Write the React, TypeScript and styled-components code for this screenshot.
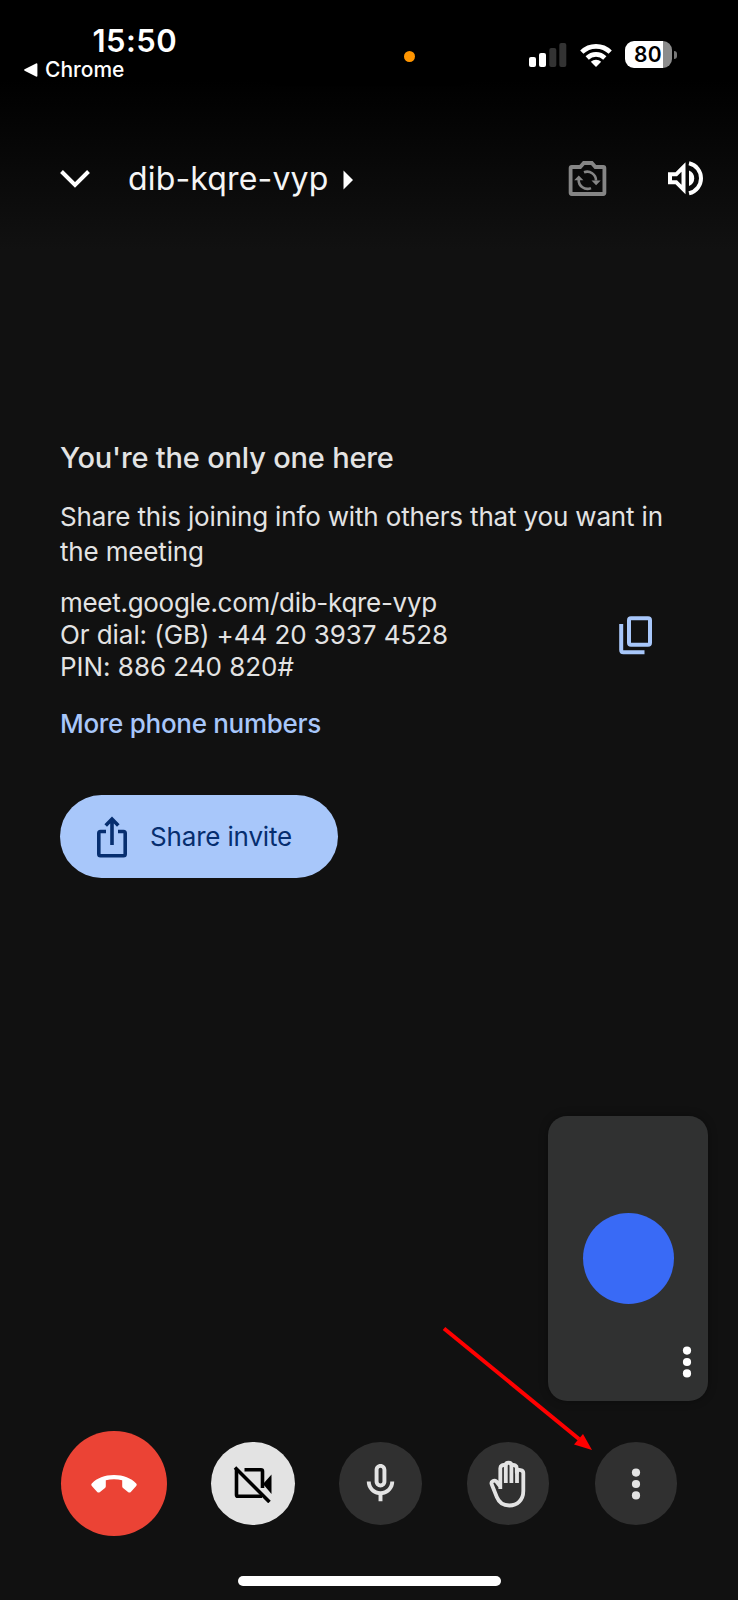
import React from "react";
import styled, { createGlobalStyle } from "styled-components";

const GlobalStyle = createGlobalStyle`
  * { box-sizing: border-box; }
  body { margin: 0; background: #121212; }
  button { border: 0; padding: 0; background: none; font: inherit; }
  svg { display: block; flex: none; }
`;

const Screen = styled.div`
  position: relative;
  width: 738px;
  height: 1600px;
  display: flex;
  flex-direction: column;
  overflow: hidden;
  background: linear-gradient(#000 0, #000 80px, #111 250px);
  color: #e3e3e3;
  font-family: Inter, "Liberation Sans", sans-serif;
`;

const StatusBar = styled.header`
  height: 110px;
  display: flex;
  align-items: flex-start;
  color: #fff;
`;

const ClockGroup = styled.div`
  width: 252px;
  padding: 25px 0 0 24px;
`;

const Clock = styled.div`
  padding-left: 68.5px;
  font-size: 31px;
  line-height: 32px;
  font-weight: 600;
  letter-spacing: 0.45px;
`;

const BackLink = styled.div`
  display: flex;
  align-items: center;
  gap: 7px;
  margin-top: 2px;
  font-size: 21px;
  line-height: 22px;
  font-weight: 500;
`;

const Island = styled.div`
  width: 232px;
  height: 60px;
  margin-top: 26px;
  padding: 24.5px 0 0 151.5px;
  border-radius: 30px;
  background: #000;
`;

const RecordingDot = styled.div`
  width: 11px;
  height: 11px;
  border-radius: 50%;
  background: #ff9500;
`;

const Indicators = styled.div`
  display: flex;
  align-items: flex-start;
  gap: 13px;
  padding: 41px 0 0 45px;
`;

const Battery = styled.div`
  position: relative;
  width: 47px;
  height: 27px;
  border-radius: 9px;
  background: linear-gradient(90deg, #fff 38px, #8c8c8c 38px);
  color: #000;
  font-size: 21px;
  line-height: 27px;
  font-weight: 600;
  letter-spacing: 0.4px;
  padding-left: 9px;

  &::after {
    content: "";
    position: absolute;
    left: 49px;
    top: 9.5px;
    width: 3px;
    height: 8px;
    border-radius: 0 3px 3px 0;
    background: #777;
  }
`;

const MeetingBar = styled.nav`
  height: 140px;
  padding: 0 34px 0 59px;
  display: flex;
  align-items: flex-start;
`;

const MeetingCode = styled.h1`
  margin: 49px 0 0 37px;
  width: 201px;
  color: #f5f5f5;
  font-size: 32px;
  line-height: 40px;
  font-weight: 400;
  letter-spacing: 0.16px;
  white-space: nowrap;
`;

const IconSlot = styled.button<{ $top: number; $left: number }>`
  margin-top: ${(p) => p.$top}px;
  margin-left: ${(p) => p.$left}px;
`;

const JoinInfo = styled.main`
  padding: 188px 60px 0;
`;

const Heading = styled.h2`
  margin: 0;
  font-size: 29px;
  line-height: 40px;
  font-weight: 500;
  letter-spacing: -0.18px;
  white-space: nowrap;
`;

const Hint = styled.p`
  margin: 21px 0 0;
  font-size: 26px;
  line-height: 35px;
  letter-spacing: -0.16px;
  white-space: nowrap;
`;

const DetailsRow = styled.div`
  display: flex;
  align-items: center;
  justify-content: space-between;
  padding-right: 26px;
  margin-top: 18px;
`;

const Details = styled.div`
  font-size: 26px;
  line-height: 32px;
`;

const Line = styled.div<{ $spacing: number }>`
  letter-spacing: ${(p) => p.$spacing}px;
  white-space: nowrap;
`;

const NumbersLink = styled.a`
  display: block;
  margin-top: 24px;
  color: #a8c7fa;
  font-size: 26px;
  line-height: 34px;
  font-weight: 500;
  letter-spacing: -0.29px;
  white-space: nowrap;
`;

const ShareButton = styled.button`
  display: flex;
  align-items: center;
  gap: 22px;
  width: 278px;
  height: 83px;
  margin-top: 54px;
  padding-left: 36px;
  border-radius: 42px;
  background: #a8c7fa;
  color: #062e6f;
  font-size: 26px;
  letter-spacing: -0.17px;
  white-space: nowrap;
`;

const SelfView = styled.section`
  flex: none;
  width: 160px;
  height: 285px;
  margin: 238px 30px 0 auto;
  padding: 97px 16px 0 34.5px;
  border-radius: 19px;
  background: #303131;
  box-shadow: 0 0 8px rgba(0, 0, 0, 0.35);
`;

const Avatar = styled.div`
  width: 91px;
  height: 91px;
  border-radius: 50%;
  background: #396af6;
`;

const TileMenu = styled.button`
  display: block;
  margin: 40.5px 0 0 auto;
`;

const Controls = styled.footer`
  display: flex;
  align-items: center;
  height: 106px;
  margin: 29.5px 0 0 61px;
`;

const ControlButton = styled.button<{ $size?: number; $bg?: string; $gap?: number }>`
  display: flex;
  align-items: center;
  justify-content: center;
  flex: none;
  width: ${(p) => p.$size ?? 82.5}px;
  height: ${(p) => p.$size ?? 82.5}px;
  margin-left: ${(p) => p.$gap ?? 45.3}px;
  border-radius: 50%;
  background: ${(p) => p.$bg ?? "#303030"};
`;

const HomeIndicator = styled.div`
  flex: none;
  width: 263px;
  height: 10px;
  margin: 39px 0 0 238px;
  border-radius: 5px;
  background: #fff;
`;

const Pointer = styled.svg`
  position: absolute;
  left: 439.5px;
  top: 1324px;
`;

const Dots = ({ color }: { color: string }) => (
  <svg width="10" height="34" viewBox="0 0 10 34" fill={color}>
    <circle cx="5" cy="5.6" r="4.1" />
    <circle cx="5" cy="17" r="4.1" />
    <circle cx="5" cy="28.4" r="4.1" />
  </svg>
);

const SignalIcon = () => (
  <svg width="38" height="27" viewBox="0 0 38 27">
    <rect x="0" y="16" width="7" height="10" rx="2" fill="#fff" />
    <rect x="10" y="12" width="7" height="14" rx="2" fill="#fff" />
    <rect x="20.3" y="7" width="7" height="19" rx="2" fill="#333" />
    <rect x="30.3" y="2" width="7" height="24" rx="2" fill="#333" />
  </svg>
);

const WifiIcon = () => (
  <svg width="32" height="27" viewBox="0 0 32 27" fill="none" stroke="#fff" strokeWidth="4.6">
    <path d="M1.8 11.2a20.3 20.3 0 0 1 28.4 0" />
    <path d="M7.2 17a12.6 12.6 0 0 1 17.6 0" />
    <path d="M10.8 20.8a7.6 7.6 0 0 1 10.4 0L16 26z" fill="#fff" stroke="none" />
  </svg>
);

export default function App() {
  return (
    <Screen>
      <GlobalStyle />
      <StatusBar>
        <ClockGroup>
          <Clock>15:50</Clock>
          <BackLink>
            <svg width="14" height="14" viewBox="0 0 14 14" fill="#fff">
              <path d="M.6 6.3 12 .4q1.400-.5 1.400.8v11.600q0 1.300-1.400.8L.6 7.700q-1-.7 0-1.400z" />
            </svg>
            Chrome
          </BackLink>
        </ClockGroup>
        <Island>
          <RecordingDot />
        </Island>
        <Indicators>
          <SignalIcon />
          <WifiIcon />
          <Battery>80</Battery>
        </Indicators>
      </StatusBar>

      <MeetingBar>
        <IconSlot $top={59} $left={0} aria-label="Minimise">
          <svg width="32" height="20" viewBox="0 0 32 20" fill="none" stroke="#fff" strokeWidth="4">
            <path d="M2.500 2.500 16 16 29.500 2.500" />
          </svg>
        </IconSlot>
        <MeetingCode>dib-kqre-vyp</MeetingCode>
        <IconSlot $top={60} $left={14} aria-label="Details">
          <svg width="11" height="20" viewBox="0 0 11 20" fill="#fff">
            <path d="M.5.5 10 10 .5 19.500z" />
          </svg>
        </IconSlot>
        <IconSlot $top={50} $left={213} aria-label="Switch camera">
          <svg width="40" height="38" viewBox="0 0 40 38" fill="none" stroke="#858585" strokeWidth="3.800">
            <path d="M4.800 7h8.400l3.600-4h8l3.600 4h7.800q1.200 0 1.200 1.200v24.600q0 1.200-1.200 1.200H4.800q-1.200 0-1.200-1.200V8.200q0-1.200 1.200-1.200z" />
            <g strokeWidth="2.600">
              <path d="M17 12.300a8.800 8.800 0 0 1 12 8.200" />
              <path d="M24 28.100A8.800 8.800 0 0 1 11.700 19.500" />
            </g>
            <path d="M24.500 20.500h9.200L29.100 25.300zM7.200 20.300h9.200L11.800 15.600z" fill="#858585" stroke="none" />
          </svg>
        </IconSlot>
        <IconSlot $top={51} $left={60.5} aria-label="Audio output">
          <svg width="36" height="35" viewBox="0 0 36 35" fill="#fff">
            <path d="M0 11.300h7.500L17.500 1.200v32L7.500 23.200H0zm4 4v4h5l4.500 4.500V10.800L9 15.300z" fillRule="evenodd" />
            <path d="M21 9.500q5.200 2.300 5.200 7.800T21 25z" />
            <path d="M21 2.300C28.500 4 33 10.500 33 17.300S28.500 30.600 21 32.300" fill="none" stroke="#fff" strokeWidth="4" />
          </svg>
        </IconSlot>
      </MeetingBar>

      <JoinInfo>
        <Heading>You're the only one here</Heading>
        <Hint>
          Share this joining info with others that you want in
          <br />
          the meeting
        </Hint>
        <DetailsRow>
          <Details>
            <Line $spacing={-0.29}>meet.google.com/dib-kqre-vyp</Line>
            <Line $spacing={-0.07}>Or dial: (GB) +44 20 3937 4528</Line>
            <Line $spacing={-0.03}>PIN: 886 240 820#</Line>
          </Details>
          <svg width="33" height="39" viewBox="0 0 33 39" fill="none" stroke="#a8c7fa" strokeWidth="4">
            <rect x="10" y="2.200" width="21" height="26.500" rx="2" />
            <path d="M2.200 8v26q0 2.200 2.200 2.200H25.500" />
          </svg>
        </DetailsRow>
        <NumbersLink>More phone numbers</NumbersLink>
        <ShareButton>
          <svg width="32" height="42" viewBox="0 0 32 42" fill="none" stroke="#062e6f" strokeWidth="3.600">
            <path d="M10 15.500H4.500Q2.800 15.500 2.800 17.200V38q0 1.700 1.700 1.700h23q1.700 0 1.700-1.700V17.200q0-1.700-1.700-1.700H22" />
            <path d="M16 29V3M9.700 9.500 16 3l6.300 6.500" />
          </svg>
          Share invite
        </ShareButton>
      </JoinInfo>

      <SelfView>
        <Avatar />
        <TileMenu aria-label="Tile options">
          <Dots color="#fff" />
        </TileMenu>
      </SelfView>

      <Controls>
        <ControlButton $size={105.5} $bg="#eb4335" $gap={0} aria-label="Leave call">
          <svg width="46" height="18" viewBox="0 0 46 18" fill="#fff">
            <path d="M23 0C13.500 0 6 3 .8 8.500q-1 1.200 0 2.400L6.200 17q1.200 1 2.500.2L14 13q.8-.6.8-1.800V5.200Q23 3.500 31.200 5.200v6q0 1.200.8 1.800l5.300 4.200q1.300.8 2.500-.2l5.400-6.100q1-1.200 0-2.400C40 3 32.500 0 23 0z" />
          </svg>
        </ControlButton>
        <ControlButton $bg="#e3e3e3" $size={83.5} $gap={44.5} aria-label="Turn on camera">
          <svg width="40" height="38" viewBox="0 0 40 38" fill="none" stroke="#000" strokeWidth="3.600">
            <path d="M3.500 4v26q0 1.300 1.300 1.300H29" />
            <path d="M11.500 4.700H28q1.500 0 1.500 1.500V23" />
            <path d="M30 19 38.500 9.500v19.500z" fill="#000" stroke="none" />
            <path d="M2 2.500 36.500 37" />
          </svg>
        </ControlButton>
        <ControlButton $gap={44.5} aria-label="Mute">
          <svg width="47" height="47" viewBox="0 0 24 24" fill="#e3e3e3">
            <path d="M12 14c1.660 0 3-1.340 3-3V5c0-1.660-1.340-3-3-3S9 3.340 9 5v6c0 1.660 1.340 3 3 3zm-1-9c0-.55.45-1 1-1s1 .45 1 1v6c0 .55-.45 1-1 1s-1-.45-1-1V5z" />
            <path d="M17 11c0 2.760-2.240 5-5 5s-5-2.240-5-5H5c0 3.530 2.610 6.430 6 6.920V21h2v-3.080c3.390-.49 6-3.390 6-6.920h-2z" />
          </svg>
        </ControlButton>
        <ControlButton aria-label="Raise hand">
          <svg width="38" height="48" viewBox="0 0 38 48" fill="none" stroke="#e3e3e3" strokeWidth="3.800" strokeLinejoin="round">
            <path d="M11.300 29V8.500a3.300 3.300 0 0 1 5-3 3.300 3.300 0 0 1 6.500 0 3.300 3.300 0 0 1 5 3v4a3.300 3.300 0 0 1 6.500 1V31c0 9-6 14.500-14 14.500-7 0-10.500-3.500-12.500-8.500L2.600 24c-.8-2.500 2.500-4.500 4.800-2.500l3.900 5" />
            <path d="M16.800 5v18M22.400 5v18M28 9v14" />
          </svg>
        </ControlButton>
        <ControlButton aria-label="More options">
          <Dots color="#e3e3e3" />
        </ControlButton>
      </Controls>
      <HomeIndicator />

      <Pointer width="156" height="130" viewBox="0 0 156 130" aria-hidden="true">
        <path d="M4 4.500 139 115" stroke="#f00" strokeWidth="4" />
        <path d="M152 126 143 110 134 120.500z" fill="#f00" />
      </Pointer>
    </Screen>
  );
}
